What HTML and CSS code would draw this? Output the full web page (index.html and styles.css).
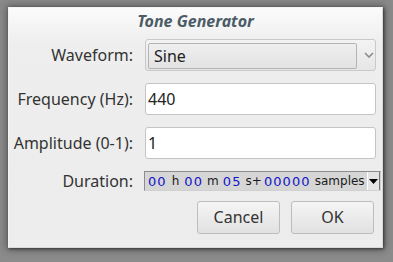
FILE: index.html
```html
<!DOCTYPE html>
<html>
<head>
<meta charset="utf-8">
<link rel="stylesheet" href="styles.css">
</head>
<body>
<div class="dialog">
  <div class="title">Tone Generator</div>
  <div class="form">
    <label class="lbl">Waveform:</label>
    <div class="select">
      <div class="select-btn">Sine</div>
      <svg class="chev" width="10" height="6" viewBox="0 0 10 6"><path d="M1 1 L5 5 L9 1" fill="none" stroke="#8a8a8a" stroke-width="1.6"/></svg>
    </div>
    <label class="lbl">Frequency (Hz):</label>
    <div class="input">440</div>
    <label class="lbl">Amplitude (0-1):</label>
    <div class="input">1</div>
    <label class="lbl">Duration:</label>
    <div class="duration-row">
      <div class="duration">
        <span class="dg">00</span><span class="un u1">h</span><span class="dg d2">00</span><span class="un u2">m</span><span class="dg d3">05</span><span class="un u3">s+</span><span class="dg d4">00000</span><span class="un u4">samples</span>
        <span class="arrow"><svg width="9" height="5" viewBox="0 0 9 5"><path d="M0 0 H9 L4.5 5 Z" fill="#000"/></svg></span>
      </div>
    </div>
  </div>
  <div class="buttons">
    <div class="btn cancel">Cancel</div>
    <div class="btn ok">OK</div>
  </div>
</div>
</body>
</html>
```
FILE: styles.css
```css
html, body {
  margin: 0;
  padding: 0;
}
body {
  width: 393px;
  height: 262px;
  background: #8b8b8b;
  font-family: "Noto Sans", "Open Sans", sans-serif;
  overflow: hidden;
}
.dialog {
  box-sizing: border-box;
  margin: 7px 0 0 8px;
  width: 375px;
  height: 241px;
  background: linear-gradient(#fbfbfb 0px, #eeeeee 36px, #ececec 100%);
  border: 1px solid #d8d8d8;
  border-top-color: #f4f4f4;
  border-left-color: #f4f4f4;
  box-shadow: 1px 1px 3px rgba(0,0,0,0.55), 0 0 8px 2px rgba(0,0,0,0.3);
  padding-top: 3px;
}
.title {
  text-align: center;
  font-weight: bold;
  font-style: italic;
  font-size: 16px;
  line-height: 20px;
  color: #4c5c67;
  margin-bottom: 8px;
}
.form {
  display: grid;
  grid-template-columns: 124px minmax(0, 1fr);
  column-gap: 12px;
  row-gap: 12px;
  padding-right: 6px;
  align-items: center;
}
.lbl {
  text-align: right;
  font-size: 16px;
  color: #333;
  line-height: 20px;
  white-space: nowrap;
}
.select {
  box-sizing: border-box;
  height: 32px;
  border: 1px solid #c9c9c9;
  border-radius: 3px;
  background: linear-gradient(#f3f3f3, #e6e6e6);
  display: flex;
  align-items: center;
  padding: 3px 0 2px 2px;
}
.select-btn {
  box-sizing: border-box;
  width: 209px;
  height: 26px;
  border: 1px solid #b4b4b4;
  border-radius: 2px;
  background: linear-gradient(#efefef, #e3e3e3);
  font-size: 16px;
  color: #222;
  line-height: 24px;
  padding-left: 5px;
}
.chev {
  margin-left: 7px;
  margin-top: -2px;
}
.input {
  box-sizing: border-box;
  height: 32px;
  border: 1px solid #c4c4c4;
  border-radius: 3px;
  background: #fff;
  font-size: 16px;
  color: #222;
  line-height: 30px;
  padding-left: 2px;
}
.duration-row {
  margin-left: -1px;
  margin-right: -5px;
}
.duration {
  box-sizing: border-box;
  height: 20px;
  border: 1px solid #8c8c8c;
  border-right-color: #d0d0d0;
  border-bottom-color: #d0d0d0;
  background: #d6d6d6;
  display: flex;
  align-items: center;
  font-family: "DejaVu Sans", sans-serif;
  font-size: 12px;
  color: #1a1a1a;
  padding-left: 3px;
  white-space: pre;
}
.dg {
  color: #1414c8;
  font-size: 13px;
  letter-spacing: 1.1px;
}
.u1 { margin: 0 5px; }
.u2 { margin: 0 4px; }
.u3 { margin: 0 2px 0 4px; }
.u4 { margin: 0 0 0 4px; }
.arrow {
  box-sizing: border-box;
  margin-left: auto;
  width: 13px;
  height: 18px;
  background: #e4e4e4;
  border-left: 1px solid #ffffff;
  border-right: 1px solid #777;
  display: flex;
  align-items: center;
  justify-content: center;
}
.buttons {
  display: flex;
  justify-content: flex-end;
  gap: 11px;
  padding-right: 8px;
  margin-top: 10px;
}
.btn {
  box-sizing: border-box;
  height: 33px;
  border: 1px solid #bdbdbd;
  border-radius: 3px;
  background: linear-gradient(#f5f5f5, #e1e1e1);
  font-size: 16px;
  color: #333;
  text-align: center;
  line-height: 31px;
}
.cancel { width: 83px; }
.ok { width: 83px; }
```
